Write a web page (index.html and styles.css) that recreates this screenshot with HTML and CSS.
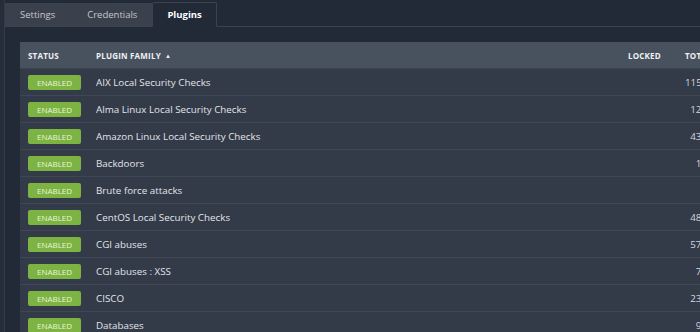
FILE: index.html
```html
<!DOCTYPE html>
<html>
<head>
<meta charset="utf-8">
<link rel="stylesheet" href="styles.css">
</head>
<body>
<div class="page">
  <div class="tabs">
    <div class="tab tab-settings">Settings</div>
    <div class="tab tab-credentials">Credentials</div>
    <div class="tab active">Plugins</div>
  </div>
  <div class="content">
    <table class="plugins">
      <colgroup>
        <col class="c-status"><col class="c-name"><col class="c-locked"><col class="c-total">
      </colgroup>
      <thead>
        <tr>
          <th>Status</th>
          <th>Plugin Family <span class="sort">▲</span></th>
          <th>Locked</th>
          <th class="total">Total</th>
        </tr>
      </thead>
      <tbody>
        <tr><td><span class="badge">ENABLED</span></td><td>AIX Local Security Checks</td><td></td><td class="num">1154</td></tr>
        <tr><td><span class="badge">ENABLED</span></td><td>Alma Linux Local Security Checks</td><td></td><td class="num">124</td></tr>
        <tr><td><span class="badge">ENABLED</span></td><td>Amazon Linux Local Security Checks</td><td></td><td class="num">431</td></tr>
        <tr><td><span class="badge">ENABLED</span></td><td>Backdoors</td><td></td><td class="num">12</td></tr>
        <tr><td><span class="badge">ENABLED</span></td><td>Brute force attacks</td><td></td><td class="num">3</td></tr>
        <tr><td><span class="badge">ENABLED</span></td><td>CentOS Local Security Checks</td><td></td><td class="num">484</td></tr>
        <tr><td><span class="badge">ENABLED</span></td><td>CGI abuses</td><td></td><td class="num">575</td></tr>
        <tr><td><span class="badge">ENABLED</span></td><td>CGI abuses : XSS</td><td></td><td class="num">76</td></tr>
        <tr><td><span class="badge">ENABLED</span></td><td>CISCO</td><td></td><td class="num">234</td></tr>
        <tr><td><span class="badge">ENABLED</span></td><td>Databases</td><td></td><td class="num">95</td></tr>
      </tbody>
    </table>
  </div>
</div>
</body>
</html>
```
FILE: styles.css
```css
html, body {
  margin: 0;
  padding: 0;
}
body {
  background: #272e3b;
  font-family: "Open Sans", "Noto Sans", sans-serif;
  overflow: hidden;
  width: 700px;
  height: 332px;
}
.page {
  margin-left: 4px;
  background: #222a38;
  border-left: 1px solid #343b48;
  min-height: 332px;
  width: 760px;
}
.tabs {
  display: flex;
  padding-top: 3px;
  border-bottom: 1px solid #3a4350;
  height: 23px;
}
.tab {
  padding: 0 15px;
  line-height: 23px;
  height: 23px;
  background: #3b414c;
  color: #c3c7ce;
  font-size: 9.5px;
}
.tab-settings {
  padding: 0 20px 0 15px;
}
.tab-credentials {
  padding: 0 15px 0 12px;
}
.tab.active {
  background: #222a38;
  color: #ffffff;
  font-weight: 700;
  border: 1px solid #3a4350;
  border-bottom-color: #222a38;
  border-radius: 2px 2px 0 0;
  height: 23px;
  line-height: 23px;
  margin-top: -1px;
  padding: 0 14px;
}
.content {
  padding: 15px 0 0 15px;
}
.plugins {
  border-collapse: collapse;
  table-layout: fixed;
  width: 740px;
}
.c-status { width: 68px; }
.c-name { width: 532px; }
.c-locked { width: 57px; }
.c-total { width: 83px; }
.plugins th {
  background: #48525f;
  color: #eef0f3;
  font-size: 8px;
  font-weight: 700;
  text-transform: uppercase;
  text-align: left;
  height: 26px;
  padding: 0 0 0 8px;
  border-bottom: 1px solid #3c4451;
  letter-spacing: 0.2px;
}
.plugins th .sort {
  font-size: 6px;
  margin-left: 2px;
  vertical-align: 1px;
}
.plugins td {
  background: #333a48;
  color: #e3e5e9;
  font-size: 9.8px;
  height: 26px;
  padding: 0 0 0 8px;
  border-bottom: 1px solid #3f4654;
}
.plugins td.num {
  text-align: right;
  padding-right: 53px;
  color: #d5d8dd;
}
.badge {
  display: inline-block;
  width: 53px;
  height: 15px;
  line-height: 15px;
  background: #7cb342;
  color: #e8f4dc;
  font-size: 8px;
  text-align: center;
  border-radius: 2px;
  vertical-align: middle;
}
```
